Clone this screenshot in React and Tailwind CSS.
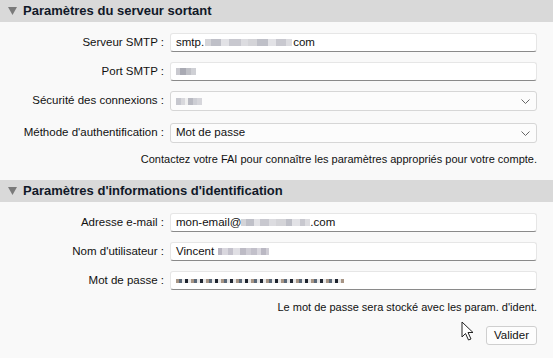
import React from "react";

const font = { fontFamily: '"Liberation Sans", Arial, sans-serif' };

function Blur({ w, colors }) {
  return (
    <span className="inline-flex items-center h-[8px] align-middle">
      {colors.map((c, i) => (
        <span key={i} className="inline-block h-[7px]" style={{ width: w[i % w.length], background: c }} />
      ))}
    </span>
  );
}

function Header({ title }) {
  return (
    <div className="h-[22px] bg-[#d9d9d9] flex items-center">
      <svg width="9" height="8" viewBox="0 0 9 8" className="ml-[8px] mr-[6px]">
        <polygon points="0,0 9,0 4.5,8" fill="#7a7a7a" />
      </svg>
      <span className="text-[13px] font-bold text-[#101828]">{title}</span>
    </div>
  );
}

function Row({ label, children, mt, select, h = 19 }) {
  return (
    <div className="flex items-center" style={{ marginTop: mt }}>
      <div className="w-[165px] text-right pr-[1px] text-[11.5px] text-[#111]">{label}</div>
      <div
        className={
          "ml-[5px] w-[367px] flex items-center pl-[5px] pr-[6px] text-[11.5px] text-[#111] rounded-[3px] " +
          (select
            ? "bg-[#fcfcfc] border border-[#d6d6d6] justify-between"
            : "bg-white border border-[#e6e6e6] border-b-[#8a8a8a]")
        }
        style={{ height: h }}
      >
        <span className="flex items-center">{children}</span>
        {select && (
          <svg width="9" height="5" viewBox="0 0 9 5">
            <polyline points="0.5,0.5 4.5,4.5 8.5,0.5" fill="none" stroke="#666" strokeWidth="1" />
          </svg>
        )}
      </div>
    </div>
  );
}

export default function App() {
  const g = ["#d4d4d8", "#bfc0c8", "#e2e2e6", "#c8c8cf", "#dcdce0"];
  const pw = [];
  for (let i = 0; i < 13; i++) {
    pw.push("#a79585", "#5a6878", "#e8e8e8", "#1f2530", "#e8e8e8");
  }
  return (
    <div className="w-[553px] h-[358px] bg-[#f9f9f9] overflow-hidden relative" style={font}>
      <Header title="Paramètres du serveur sortant" />
      <Row label="Serveur SMTP :" mt={11}>
        smtp.<span className="mx-[1px]"><Blur w={[6, 10, 8, 12, 7, 9, 11, 8, 10, 6]} colors={g.concat(g)} /></span>com
      </Row>
      <Row label="Port SMTP :" mt={10}>
        <Blur w={[4, 6, 5, 5]} colors={["#c9c9cf", "#a9aab3", "#bfc0c6", "#cfd0d5"]} />
      </Row>
      <Row label="Sécurité des connexions :" mt={10} select h={20}>
        <Blur w={[5, 4, 3, 5, 4, 5]} colors={["#c6c7ce", "#d8d8dc", "#f0f0f0", "#b9bac2", "#cdced4", "#d6d6db"]} />
      </Row>
      <Row label="Méthode d'authentification :" mt={12} select h={20}>
        Mot de passe
      </Row>
      <div className="mt-[9px] h-[14px] text-[11px] text-[#111] text-right pr-[16px] leading-[14px]">
        Contactez votre FAI pour connaître les paramètres appropriés pour votre compte.
      </div>
      <div className="mt-[14px]">
        <Header title="Paramètres d'informations d'identification" />
      </div>
      <Row label="Adresse e-mail :" mt={11}>
        mon-email@<Blur w={[5, 8, 6, 9, 7, 10, 6, 8, 5]} colors={g.concat(g)} />.com
      </Row>
      <Row label="Nom d'utilisateur :" mt={10}>
        Vincent<span className="ml-[4px]"><Blur w={[4, 6, 5, 7, 6, 5, 6, 4, 5, 3]} colors={["#b9b6c2", "#d9d7de", "#c4c2cc", "#e0dfe4", "#bdbbc5", "#cfcdd5", "#c2c0ca", "#d9d7de", "#bab8c3", "#cfcdd5"]} /></span>
      </Row>
      <Row label="Mot de passe :" mt={10}>
        <span className="inline-flex items-center">
          {pw.slice(0, 56).map((c, i) => (
            <span key={i} className="inline-block w-[3px] h-[4px]" style={{ background: c }} />
          ))}
        </span>
      </Row>
      <div className="mt-[10px] h-[14px] text-[11px] text-[#111] text-right pr-[16px] leading-[14px]">
        Le mot de passe sera stocké avec les param. d'ident.
      </div>
      <div className="flex justify-end pr-[16px] mt-[12px]">
        <button className="w-[51px] h-[19px] bg-[#fdfdfd] border border-[#cfcfcf] rounded-[3px] text-[11.5px] text-[#111] leading-none">
          Valider
        </button>
      </div>
      <svg className="absolute left-[461px] top-[321px]" width="14" height="20" viewBox="0 0 14 20">
        <path d="M1,1 L1,16 L4.5,12.5 L7.5,19 L10,18 L7,11.5 L12,11.5 Z" fill="#fff" stroke="#222" strokeWidth="1" strokeLinejoin="round" />
      </svg>
    </div>
  );
}
